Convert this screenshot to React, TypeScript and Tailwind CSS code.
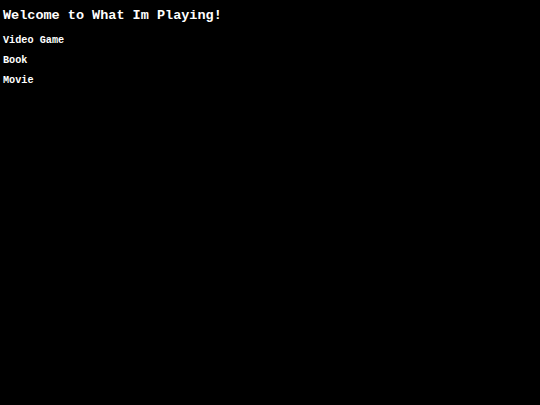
export default function App() {
  const items = ["Video Game", "Book", "Movie"];
  return (
    <div className="min-h-screen bg-black px-[3px] pt-[8px] text-white font-['Liberation_Mono',monospace] font-bold">
      <h1 className="text-[13.5px] leading-[16px]">Welcome to What Im Playing!</h1>
      <div className="mt-[11px] flex flex-col gap-[8px]">
        {items.map((item) => (
          <p key={item} className="text-[10.2px] leading-[12px]">
            {item}
          </p>
        ))}
      </div>
    </div>
  );
}
